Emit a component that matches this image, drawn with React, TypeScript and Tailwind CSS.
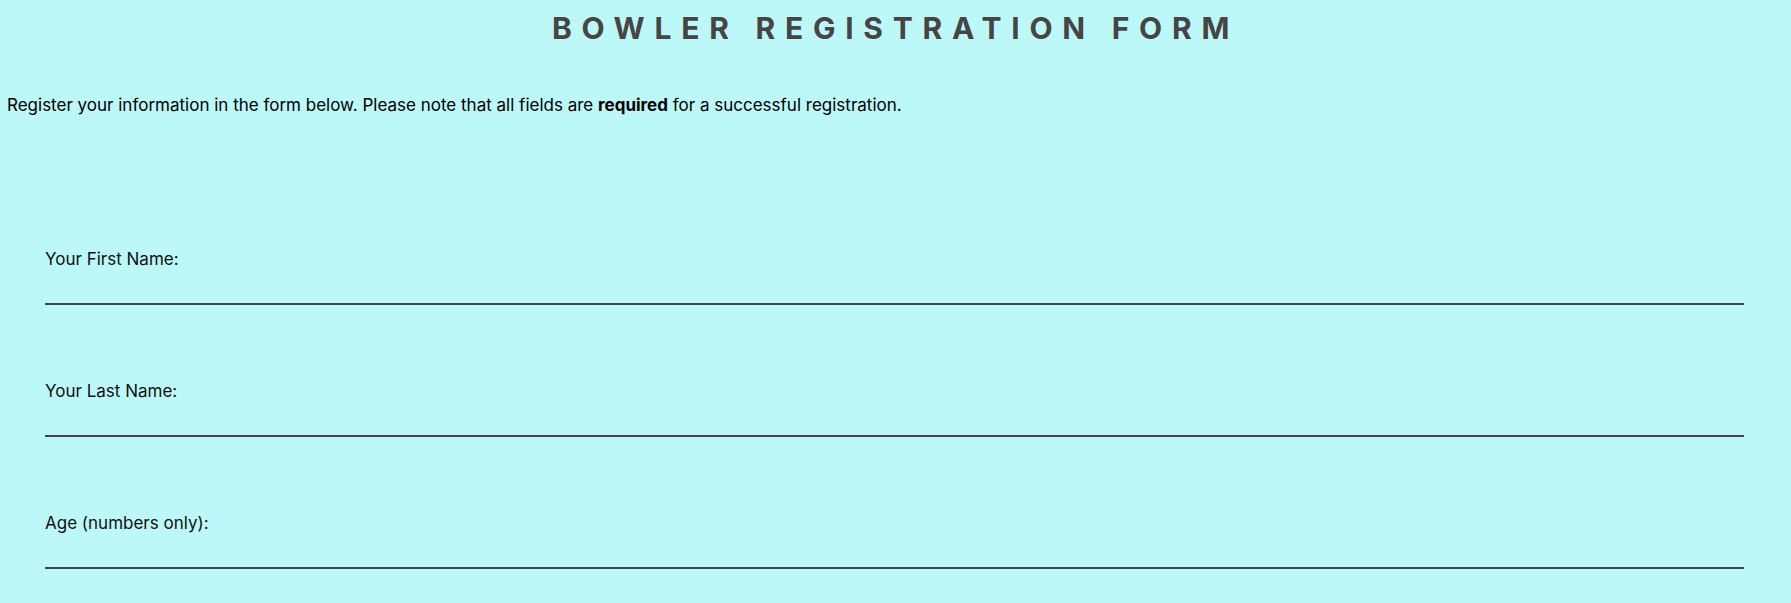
import React from 'react';

const fields = [
  { id: 'first', label: 'Your First Name:' },
  { id: 'last', label: 'Your Last Name:' },
  { id: 'age', label: 'Age (numbers only):' },
];

export default function App() {
  return (
    <div className="min-h-screen bg-[#bdf8f9] font-['Inter',sans-serif] text-black">
      <h1 className="pt-[13px] text-center text-[30px] font-bold leading-none tracking-[0.325em] text-[#474443]">
        BOWLER REGISTRATION FORM
      </h1>

      <p className="mt-[54px] pl-[7px] text-[17px] leading-none">
        Register your information in the form below. Please note that all fields are <strong>required</strong> for a
        successful registration.
      </p>

      <form className="mt-[137px] flex flex-col gap-[78px] pl-[45px] pr-[47px]">
        {fields.map((f) => (
          <div key={f.id} className="flex flex-col">
            <label htmlFor={f.id} className="text-[17px] leading-none text-[#111]">
              {f.label}
            </label>
            <input
              id={f.id}
              type="text"
              className="h-[37px] w-full border-b-2 border-[#474443] bg-transparent outline-none"
            />
          </div>
        ))}
      </form>
    </div>
  );
}
